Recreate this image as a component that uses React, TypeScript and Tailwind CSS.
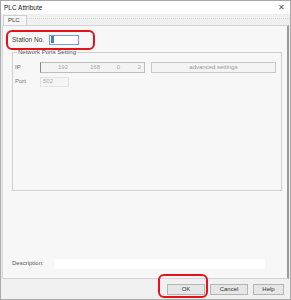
import React from "react"

const font = { fontFamily: '"Liberation Sans", Arial, sans-serif' }

function Btn({ label, w }: { label: string; w: string }) {
  return (
    <div
      className={`${w} h-[11px] border border-[#b4b4b4] bg-[#e6e6e6] flex items-center justify-center text-[6px] text-[#333]`}
    >
      {label}
    </div>
  )
}

export default function App() {
  return (
    <div
      className="relative w-[291px] h-[300px] bg-[#f0f0f0] border border-[#a8a8a8] flex flex-col overflow-hidden text-[6px] text-[#444]"
      style={font}
    >
      {/* title bar */}
      <div className="h-[13px] bg-white flex items-center justify-between pl-[3px] pr-[5px] shrink-0">
        <span className="text-[6.5px] text-[#222]">PLC Attribute</span>
        <span className="text-[8px] leading-none text-[#555]">✕</span>
      </div>

      {/* tabs */}
      <div className="h-[11px] flex items-end pl-[2px] shrink-0">
        <div className="w-[24px] h-[10px] bg-[#f7f7f7] border-t border-l border-r border-[#cfcfcf] flex items-center pl-[4px] text-[#333]">
          PLC
        </div>
        <div className="flex-1 self-start mt-[4px] border-t border-dotted border-[#d6d6d6]" />
      </div>

      {/* tab panel */}
      <div className="mx-[1px] h-[254px] bg-[#f7f7f7] border border-[#d4d4d4] border-r-[#9a9a9a] border-r-2 flex flex-col pl-[9px] pr-[5px] pt-[8px] shrink-0">
        <div className="flex items-center h-[11px]">
          <span className="w-[37px] text-[#444] text-[6.5px]">Station No.</span>
          <div className="w-[30px] h-[10px] bg-white border border-[#7a9cd3] flex items-center pl-[1px]">
            <div className="w-[3px] h-[7px] bg-[#3c7fd8]" />
          </div>
        </div>

        {/* group box */}
        <div className="relative mt-[7px] h-[139px] border border-[#d0d0d0] pl-[2px] pt-[8px]">
          <span className="absolute -top-[4px] left-[4px] bg-[#f7f7f7] px-[1px] text-[#555] text-[6px] leading-none">
            Network Ports Setting
          </span>
          <div className="flex items-center h-[12px]">
            <span className="w-[25px] text-[#666]">IP</span>
            <div className="w-[105px] h-[11px] border border-[#bdbdbd] border-l-[#888] bg-[#f3f3f3] flex items-center text-[#aaa]">
              <span className="w-[27px] text-right">192</span>
              <span className="w-[32px] text-right">168</span>
              <span className="w-[20px] text-right">0</span>
              <span className="w-[21px] text-right">2</span>
            </div>
            <div className="ml-[6px] w-[125px] h-[11px] border border-[#c8c8c8] bg-[#f4f4f4] flex items-center justify-center text-[#999]">
              advanced settings
            </div>
          </div>
          <div className="flex items-center h-[11px] mt-[3px]">
            <span className="w-[25px] text-[#777]">Port</span>
            <div className="w-[29px] h-[10px] border border-[#e2e2e2] bg-[#f4f4f4] flex items-center pl-[2px] text-[#aaa]">
              502
            </div>
          </div>
        </div>

        <div className="flex-1" />
        <div className="flex items-center h-[11px] mb-[9px]">
          <span className="w-[42px] text-[#555]">Description:</span>
          <div className="w-[211px] h-[10px] bg-white" />
        </div>
      </div>

      {/* buttons */}
      <div className="flex-1 flex items-start justify-end gap-[5px] pr-[6px] pt-[5px]">
        <Btn label="OK" w="w-[38px]" />
        <Btn label="Cancel" w="w-[38px]" />
        <Btn label="Help" w="w-[31px]" />
      </div>

      {/* red annotations */}
      <div className="absolute left-[5px] top-[29px] w-[89px] h-[20px] border-2 border-[#e8101a] rounded-[6px]" />
      <div className="absolute left-[157px] top-[273px] w-[50px] h-[24px] border-2 border-[#e8101a] rounded-[6px]" />
    </div>
  )
}
